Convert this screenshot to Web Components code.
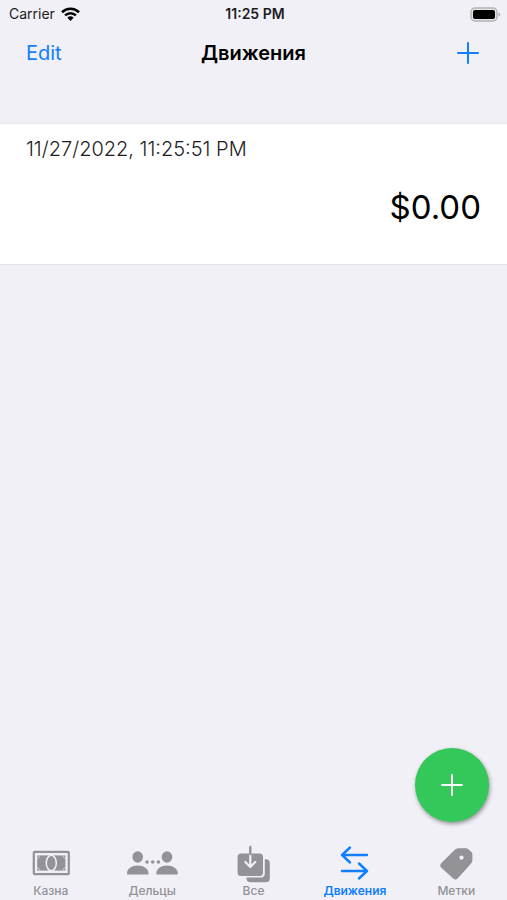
<!DOCTYPE html>
<html lang="ru">
<head>
<meta charset="utf-8">
<meta name="viewport" content="width=device-width, initial-scale=1">
<title>Движения</title>
<style>
html, body {
    height: 100%;
    margin: 0;
}
body {
    font-family: Inter, "Liberation Sans", sans-serif;
    background: #f1f0f6;
    color: #000;
    --azul: #0f7fff;
    --gris: #929297;
    --verde: #34c759;
}
</style>
</head>
<body>
<app-movimientos></app-movimientos>

<script>
class barraEstado extends HTMLElement {
    constructor() {
        super();
        this.attachShadow({ mode: "open" });
        this.shadowRoot.innerHTML = `
        <style>
        :host {
            display: grid;
            grid-template-columns: 1fr auto 1fr;
            align-items: center;
            height: 28px;
            padding: 0 6px 0 9px;
            font-size: 14px;
            line-height: 20px;
            color: #1c1c1e;
        }
        .operador {
            display: flex;
            align-items: center;
            gap: 6px;
        }
        .hora {
            font-weight: 600;
        }
        .bateria {
            justify-self: end;
        }
        svg {
            display: block;
        }
        </style>
        <div class="operador">
            <span><slot name="operador"></slot></span>
            <svg width="19" height="14" viewBox="0 0 19 14" fill="none" stroke="#000" stroke-width="2.6">
                <path d="M1 5.2a12.2 12.2 0 0 1 17 0"/>
                <path d="M4.1 8.4a7.8 7.8 0 0 1 10.8 0"/>
                <path d="M9.5 14 6.4 10.8a4.5 4.5 0 0 1 6.2 0z" fill="#000" stroke="none"/>
            </svg>
        </div>
        <span class="hora"><slot name="hora"></slot></span>
        <svg class="bateria" width="31" height="15" viewBox="0 0 31 15">
            <rect x="1" y="1" width="26" height="13" rx="4" fill="#e4e4e8" stroke="#b4b4b8" stroke-width="1.5"/>
            <rect x="3" y="3" width="22" height="9" rx="2" fill="#000"/>
            <path d="M28.5 5.5q2 .6 2 2t-2 2z" fill="#b4b4b8"/>
        </svg>
        `;
    }
}
customElements.define("barra-estado", barraEstado);

class barraNavegacion extends HTMLElement {
    constructor() {
        super();
        this.attachShadow({ mode: "open" });
        this.shadowRoot.innerHTML = `
        <style>
        :host {
            display: grid;
            grid-template-columns: 1fr auto 1fr;
            align-items: center;
            height: 50px;
            padding: 0 26px;
        }
        button {
            justify-self: start;
            padding: 0;
            border: 0;
            background: none;
            color: var(--azul);
            font: inherit;
            font-size: 20px;
            line-height: 24px;
        }
        .agregar {
            justify-self: end;
        }
        h1 {
            margin: 0;
            font-size: 20px;
            font-weight: 600;
            line-height: 24px;
        }
        svg {
            display: block;
        }
        </style>
        <button type="button"><slot name="editar"></slot></button>
        <h1><slot></slot></h1>
        <button type="button" class="agregar" aria-label="Добавить">
            <svg width="26" height="24" viewBox="0 0 26 24" fill="none" stroke="currentColor" stroke-width="2" stroke-linecap="round">
                <path d="M13 2v20M3 12h20"/>
            </svg>
        </button>
        `;
    }
}
customElements.define("barra-navegacion", barraNavegacion);

class filaMovimiento extends HTMLElement {
    constructor() {
        super();
        this.attachShadow({ mode: "open" });
        this.shadowRoot.innerHTML = `
        <style>
        :host {
            display: flex;
            flex-direction: column;
            gap: 24px;
            padding: 13px 26px 35px;
            border-top: 1px solid #e9e9ed;
            border-bottom: 1px solid #e4e4e8;
            background: #fff;
        }
        .fecha {
            font-size: 20px;
            font-weight: 300;
            line-height: 24px;
            color: #1c1c1e;
        }
        .monto {
            align-self: flex-end;
            font-size: 33px;
            line-height: 44px;
        }
        </style>
        <span class="fecha"><slot name="fecha"></slot></span>
        <span class="monto"><slot name="monto"></slot></span>
        `;
    }
}
customElements.define("fila-movimiento", filaMovimiento);

class botonFlotante extends HTMLElement {
    constructor() {
        super();
        this.attachShadow({ mode: "open" });
        this.shadowRoot.innerHTML = `
        <style>
        :host {
            display: block;
        }
        button {
            display: flex;
            align-items: center;
            justify-content: center;
            width: 74px;
            height: 74px;
            padding: 0;
            border: 0;
            border-radius: 50%;
            background: var(--verde);
            box-shadow: 1px 2px 4px rgba(0, 0, 0, 0.4);
        }
        </style>
        <button type="button" aria-label="Новое движение">
            <svg width="24" height="24" viewBox="0 0 24 24" fill="none" stroke="#fff" stroke-width="2" stroke-linecap="round">
                <path d="M12 2v20M2 12h20"/>
            </svg>
        </button>
        `;
    }
}
customElements.define("boton-flotante", botonFlotante);

const iconos = {
    billete: `
        <rect x="10.8" y="6.8" width="35" height="22.4" rx="1" fill="none" stroke="currentColor" stroke-width="2.2"/>
        <rect x="14.2" y="10.4" width="28.2" height="15.2" fill="currentColor"/>
        <ellipse cx="28.3" cy="18" rx="5" ry="7.8" fill="currentColor" stroke="#f1f0f6" stroke-width="1.5"/>
        <path d="M14 13.500q2.400-.4 2.800-3.200M42.600 13.500q-2.400-.4-2.800-3.200M14 22.500q2.400.4 2.800 3.200M42.600 22.500q-2.400.4-2.800 3.200" fill="none" stroke="#f1f0f6" stroke-width=".6"/>`,
    personas: `
        <g fill="currentColor">
            <ellipse cx="13.7" cy="12" rx="5.3" ry="5.8"/>
            <path d="M3.5 29.500q-.5 0-.5-1.500c0-4 4.800-7.500 10.700-7.500S24.500 24 24.500 28q0 1.500-.5 1.500z"/>
            <ellipse cx="43" cy="12" rx="5.3" ry="5.8"/>
            <path d="M32.800 29.500q-.5 0-.5-1.500c0-4 4.800-7.500 10.700-7.500S53.800 24 53.800 28q0 1.500-.5 1.500z"/>
            <circle cx="23" cy="17" r="1.800"/>
            <circle cx="28.700" cy="17" r="1.800"/>
            <circle cx="34.400" cy="17" r="1.800"/>
        </g>`,
    todo: `
        <path fill="currentColor" d="M38.800 14.200h1a4 4 0 0 1 4 4v15a4 4 0 0 1-4 4H24.500a4 4 0 0 1-4-4v-.6h14.300a4 4 0 0 0 4-4z"/>
        <rect x="11.6" y="8.6" width="25.400" height="22.400" rx="3.5" fill="currentColor"/>
        <path d="M24.300 9v12M19.300 17l5 5 5-5" fill="none" stroke="#f1f0f6" stroke-width="2.200" stroke-linecap="round" stroke-linejoin="round"/>
        <path d="M24.300 2v7" fill="none" stroke="currentColor" stroke-width="2.400" stroke-linecap="round"/>`,
    flechas: `
        <g fill="none" stroke="currentColor" stroke-width="2.400" stroke-linecap="round" stroke-linejoin="round">
            <path d="M40 10H15M23 2.500 15 10l8 7.500"/>
            <path d="M15 26h25M32 18.500l8 7.500-8 7.500"/>
        </g>`,
    etiqueta: `
        <path fill="currentColor" fill-rule="evenodd" d="M30.500 3.200h7.300q1.400 0 2.400.9l3.200 3q1 1 1 2.400v5.800q0 1.800-1.300 3.100L29.600 33.500q-2.200 2-4.400 0L13.400 22.800q-2.200-2.200-.2-4.500L26.500 4.900q1.700-1.700 4-1.700zM33.500 10.500a2.100 2.100 0 1 0 .01 0z"/>`
};

class pestanaMenu extends HTMLElement {
    constructor() {
        super();
        this.attachShadow({ mode: "open" });
        this.shadowRoot.innerHTML = `
        <style>
        :host {
            display: block;
            flex: 1 1 0;
            min-width: 0;
            color: var(--gris);
        }
        :host([activa]) {
            color: var(--azul);
        }
        a {
            display: flex;
            flex-direction: column;
            align-items: center;
            color: inherit;
            text-decoration: none;
            font-size: 12px;
            font-weight: 500;
            line-height: 14px;
        }
        :host([activa]) a {
            font-weight: 600;
        }
        svg {
            display: block;
        }
        </style>
        <a href="#">
            <svg width="56" height="39" viewBox="0 0 56 39" aria-hidden="true"></svg>
            <span><slot></slot></span>
        </a>
        `;
    }
    connectedCallback() {
        this._svg = this.shadowRoot.querySelector("svg");
        this._svg.innerHTML = iconos[this.getAttribute("icono")];
        if (this.hasAttribute("activa")) {
            this.shadowRoot.querySelector("a").setAttribute("aria-current", "page");
        }
    }
}
customElements.define("pestana-menu", pestanaMenu);

class barraPestanas extends HTMLElement {
    constructor() {
        super();
        this.attachShadow({ mode: "open" });
        this.shadowRoot.innerHTML = `
        <style>
        :host {
            display: block;
        }
        nav {
            display: flex;
            padding: 0 0 2px;
        }
        </style>
        <nav><slot></slot></nav>
        `;
    }
}
customElements.define("barra-pestanas", barraPestanas);

class appMovimientos extends HTMLElement {
    constructor() {
        super();
        this.attachShadow({ mode: "open" });
        this.shadowRoot.innerHTML = `
        <style>
        :host {
            display: flex;
            flex-direction: column;
            min-height: 100%;
        }
        main {
            flex: 1;
            display: flex;
            flex-direction: column;
            justify-content: space-between;
            padding: 45px 0 23px;
        }
        boton-flotante {
            align-self: flex-end;
            margin-right: 18px;
        }
        </style>
        <barra-estado>
            <span slot="operador">Carrier</span>
            <span slot="hora">11:25 PM</span>
        </barra-estado>
        <barra-navegacion>
            <span slot="editar">Edit</span>
            Движения
        </barra-navegacion>
        <main>
            <fila-movimiento>
                <span slot="fecha">11/27/2022, 11:25:51 PM</span>
                <span slot="monto">$0.00</span>
            </fila-movimiento>
            <boton-flotante></boton-flotante>
        </main>
        <barra-pestanas>
            <pestana-menu icono="billete">Казна</pestana-menu>
            <pestana-menu icono="personas">Дельцы</pestana-menu>
            <pestana-menu icono="todo">Все</pestana-menu>
            <pestana-menu icono="flechas" activa>Движения</pestana-menu>
            <pestana-menu icono="etiqueta">Метки</pestana-menu>
        </barra-pestanas>
        `;
    }
}
customElements.define("app-movimientos", appMovimientos);
</script>
</body>
</html>
